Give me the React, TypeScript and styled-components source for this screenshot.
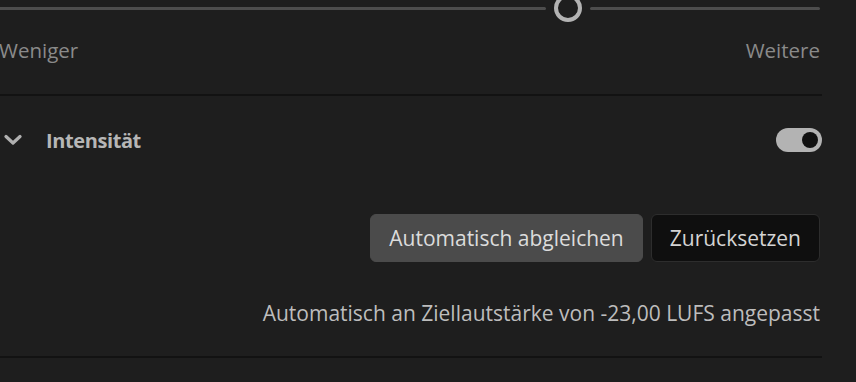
import styled, { createGlobalStyle } from "styled-components";

const GlobalStyle = createGlobalStyle`
  html, body {
    margin: 0;
    padding: 0;
    background: #1e1e1e;
    overflow: hidden;
  }
  body {
    font-family: "Open Sans", "Noto Sans", sans-serif;
  }
`;

export default function App() {
  return (
    <>
      <GlobalStyle />
      <Panel>
        <SliderRow>
          <Track />
          <Thumb />
          <Track $fixed />
        </SliderRow>
        <Labels>
          <span>Weniger</span>
          <span>Weitere</span>
        </Labels>
        <Divider $top={30} />
        <SectionHeader>
          <Chevron viewBox="0 0 18 12">
            <path d="M2 2.5 L9 9 L16 2.5" />
          </Chevron>
          <Title>Intensität</Title>
          <Toggle>
            <Knob />
          </Toggle>
        </SectionHeader>
        <Actions>
          <Button $primary>Automatisch abgleichen</Button>
          <Button>Zurücksetzen</Button>
        </Actions>
        <Info>Automatisch an Ziellautstärke von -23,00 LUFS angepasst</Info>
        <Divider $top={29} />
      </Panel>
    </>
  );
}

const Panel = styled.div`
  width: 823px;
  margin-top: -6px;
  margin-left: -1px;
  display: flex;
  flex-direction: column;
`;

const SliderRow = styled.div`
  display: flex;
  align-items: center;
  height: 28px;
  gap: 8px;
  padding-right: 2px;
`;

const Track = styled.div<{ $fixed?: boolean }>`
  flex: ${(p) => (p.$fixed ? "0 0 230px" : "1")};
  height: 3px;
  background: #4d4d4d;
  border-radius: 2px;
`;

const Thumb = styled.div`
  width: 28px;
  height: 28px;
  box-sizing: border-box;
  border: 4px solid #b3b3b3;
  border-radius: 50%;
`;

const Labels = styled.div`
  display: flex;
  justify-content: space-between;
  padding-right: 2px;
  margin-top: 14px;
  font-size: 20.5px;
  line-height: 28px;
  color: #8a8a8a;
`;

const Divider = styled.div<{ $top: number }>`
  height: 2px;
  background: #121212;
  margin-top: ${(p) => p.$top}px;
`;

const SectionHeader = styled.div`
  display: flex;
  align-items: center;
  height: 88px;
`;

const Chevron = styled.svg`
  width: 18px;
  height: 12px;
  margin-left: 5px;
  fill: none;
  stroke: #b0b0b0;
  stroke-width: 3.2;
  stroke-linecap: round;
  stroke-linejoin: round;
`;

const Title = styled.span`
  flex: 1;
  margin-left: 24px;
  font-size: 20px;
  font-weight: 700;
  color: #b6b6b6;
  letter-spacing: -0.4px;
`;

const Toggle = styled.div`
  width: 46px;
  height: 24px;
  border-radius: 12px;
  background: #b3b3b3;
  display: flex;
  align-items: center;
  justify-content: flex-end;
  padding-right: 4px;
  box-sizing: border-box;
`;

const Knob = styled.div`
  width: 16px;
  height: 16px;
  border-radius: 50%;
  background: #111;
`;

const Actions = styled.div`
  display: flex;
  justify-content: flex-end;
  gap: 8px;
  margin-top: 30px;
  padding-right: 2px;
`;

const Button = styled.button<{ $primary?: boolean }>`
  height: 48px;
  padding: 0 18px;
  border-radius: 6px;
  font-family: inherit;
  font-size: 21px;
  cursor: pointer;
  background: ${(p) => (p.$primary ? "#4b4b4b" : "#0f0f0f")};
  color: ${(p) => (p.$primary ? "#dcdcdc" : "#d4d4d4")};
  border: 1px solid ${(p) => (p.$primary ? "#4b4b4b" : "#2d2d2d")};
`;

const Info = styled.div`
  text-align: right;
  padding-right: 2px;
  margin-top: 37px;
  font-size: 21px;
  line-height: 28px;
  color: #bdbdbd;
`;
